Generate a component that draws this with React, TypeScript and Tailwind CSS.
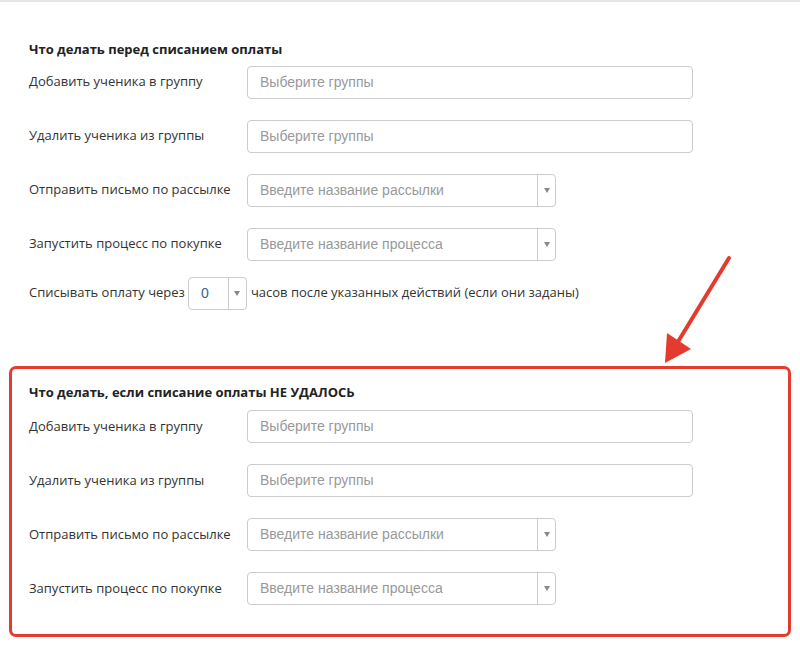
import { ReactNode } from "react";

const labelFont = { fontFamily: '"Open Sans", "Liberation Sans", sans-serif' };

// Plain text input with placeholder
const TextBox = ({ placeholder }: { placeholder: string }) => (
  <div className="flex h-[33px] w-[446px] items-center rounded border border-[#ccc] bg-white px-[12px] font-['Liberation_Sans',sans-serif] text-[14px] text-[#999]">
    {placeholder}
  </div>
);

// Select with a small caret section on the right
const SelectBox = ({ placeholder, width = "w-[309px]" }: { placeholder: string; width?: string }) => (
  <div className={`flex h-[33px] ${width} items-stretch rounded border border-[#ccc] bg-white font-['Liberation_Sans',sans-serif] text-[14px]`}>
    <div className="flex flex-1 items-center px-[12px] text-[#999]">{placeholder}</div>
    <div className="flex w-[18px] items-center justify-center border-l border-[#ccc]">
      <span className="h-0 w-0 border-x-[3px] border-t-[5px] border-x-transparent border-t-[#888]" />
    </div>
  </div>
);

const Row = ({ label, children }: { label: string; children: ReactNode }) => (
  <div className="flex items-center">
    <div className="w-[218px] text-[13px] text-[#333]" style={labelFont}>
      {label}
    </div>
    {children}
  </div>
);

const Actions = () => (
  <div className="flex flex-col gap-[21px]">
    <Row label="Добавить ученика в группу">
      <TextBox placeholder="Выберите группы" />
    </Row>
    <Row label="Удалить ученика из группы">
      <TextBox placeholder="Выберите группы" />
    </Row>
    <Row label="Отправить письмо по рассылке">
      <SelectBox placeholder="Введите название рассылки" />
    </Row>
    <Row label="Запустить процесс по покупке">
      <SelectBox placeholder="Введите название процесса" />
    </Row>
  </div>
);

export default function App() {
  return (
    <div className="relative h-[648px] w-[800px] overflow-hidden border-t-2 border-[#e5e5e5] bg-white">
      <div className="pl-[29px] pt-[38px]">
        <h3 className="mb-[6px] text-[13px] font-bold text-[#222]" style={labelFont}>
          Что делать перед списанием оплаты
        </h3>
        <Actions />
        <div className="mt-[16px] flex items-center text-[13px] text-[#333]" style={labelFont}>
          <span className="mr-[3px]">Списывать оплату через</span>
          <div className="flex h-[33px] w-[59px] items-stretch rounded border border-[#ccc] bg-white font-['Liberation_Sans',sans-serif] text-[14px]">
            <div className="flex flex-1 items-center pl-[12px] text-[#336699]">0</div>
            <div className="flex w-[18px] items-center justify-center border-l border-[#ccc]">
              <span className="h-0 w-0 border-x-[3px] border-t-[5px] border-x-transparent border-t-[#888]" />
            </div>
          </div>
          <span className="ml-[4px]">часов после указанных действий (если они заданы)</span>
        </div>
      </div>

      <div className="mx-[9px] mt-[56px] rounded-[7px] border-[3px] border-[#e53b2f] pb-[29px] pl-[17px] pt-[14px]">
        <h3 className="mb-[8px] text-[13px] font-bold text-[#222]" style={labelFont}>
          Что делать, если списание оплаты НЕ УДАЛОСЬ
        </h3>
        <Actions />
      </div>

      {/* annotation arrow */}
      <svg className="pointer-events-none absolute left-0 top-0" width="800" height="648">
        <line x1="729" y1="256" x2="676" y2="343" stroke="#e53b2f" strokeWidth="4" strokeLinecap="round" />
        <polygon points="665,361 667,331 691,347" fill="#e53b2f" />
      </svg>
    </div>
  );
}
